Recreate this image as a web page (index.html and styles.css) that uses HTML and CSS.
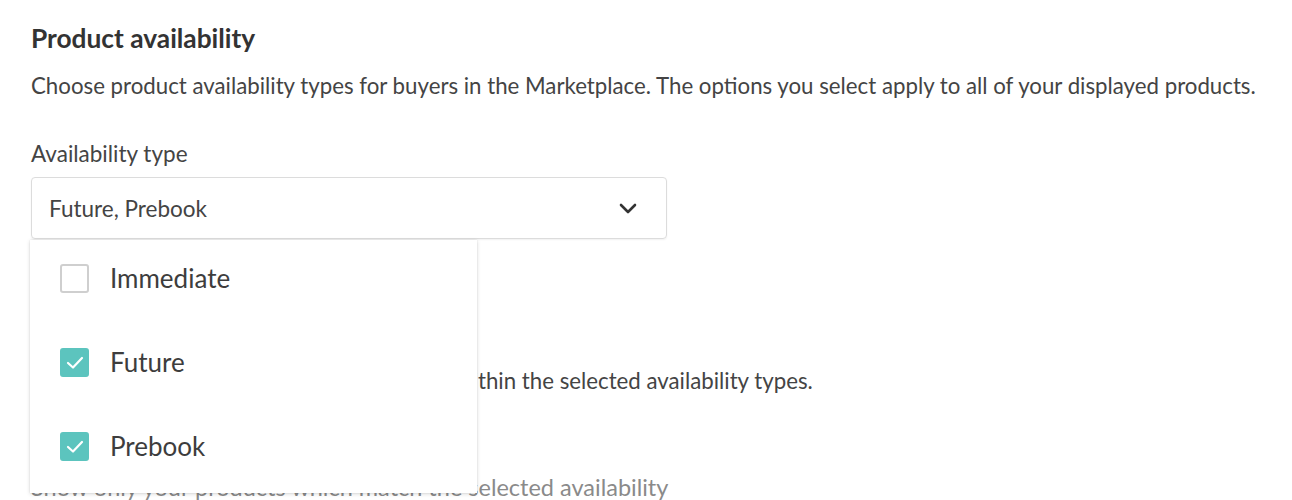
FILE: index.html
```html
<!DOCTYPE html>
<html lang="en">
<head>
<meta charset="utf-8">
<title>Product availability</title>
<link rel="stylesheet" href="styles.css">
</head>
<body>
<main class="page">
  <h2 class="title">Product availability</h2>
  <p class="desc">Choose product availability types for buyers in the Marketplace. The options you select apply to all of your displayed products.</p>
  <div class="field-label">Availability type</div>
  <div class="select-wrap">
    <div class="select">
      <span class="select-value">Future, Prebook</span>
      <svg class="chevron" width="18" height="11" viewBox="0 0 18 11"><path d="M2 2 L9 9 L16 2" fill="none" stroke="#333" stroke-width="2.6" stroke-linecap="round" stroke-linejoin="round"/></svg>
    </div>
    <div class="menu">
      <label class="option">
        <span class="box"></span>
        <span class="option-text">Immediate</span>
      </label>
      <label class="option">
        <span class="box checked"><svg width="20" height="15" viewBox="0 0 20 15"><path d="M3 8 L8 12.5 L17 3" fill="none" stroke="#fff" stroke-width="2.2" stroke-linecap="round" stroke-linejoin="round"/></svg></span>
        <span class="option-text">Future</span>
      </label>
      <label class="option">
        <span class="box checked"><svg width="20" height="15" viewBox="0 0 20 15"><path d="M3 8 L8 12.5 L17 3" fill="none" stroke="#fff" stroke-width="2.2" stroke-linecap="round" stroke-linejoin="round"/></svg></span>
        <span class="option-text">Prebook</span>
      </label>
    </div>
  </div>
  <p class="note">Buyers will view products that are available within the selected availability types.</p>
  <p class="note muted">Show only your products which match the selected availability</p>
</main>
</body>
</html>
```
FILE: styles.css
```css
html, body {
  margin: 0;
  padding: 0;
  background: #fff;
}
body {
  font-family: Lato, "Open Sans", "Liberation Sans", sans-serif;
  color: #444;
  overflow: hidden;
}
.page {
  padding: 23px 0 0 31px;
}
.title {
  margin: 0;
  font-size: 26.3px;
  font-weight: 700;
  line-height: 30px;
  color: #333;
}
.desc {
  margin: 19px 0 0;
  font-size: 22.25px;
  line-height: 28px;
  color: #444;
}
.field-label {
  margin-top: 40px;
  font-size: 22.5px;
  line-height: 28px;
  color: #444;
}
.select-wrap {
  position: relative;
  width: 636px;
  margin-top: 9px;
}
.select {
  box-sizing: border-box;
  height: 62px;
  border: 1px solid #dcdcdc;
  border-radius: 4px;
  display: flex;
  align-items: center;
  justify-content: space-between;
  padding: 0 29px 0 17px;
  box-shadow: 0 1px 2px rgba(0,0,0,0.06);
}
.select-value {
  font-size: 22.5px;
  color: #444;
}
.chevron {
  display: block;
}
.menu {
  position: absolute;
  top: 63px;
  left: -1px;
  width: 447px;
  box-sizing: border-box;
  background: #fff;
  padding: 24px 0 33px 30px;
  display: flex;
  flex-direction: column;
  gap: 56px;
  box-shadow: 0 1px 4px rgba(0,0,0,0.16), 0 0 1px rgba(0,0,0,0.12);
  z-index: 2;
}
.option {
  display: flex;
  align-items: center;
  gap: 21px;
  height: 28px;
}
.box {
  box-sizing: border-box;
  width: 29px;
  height: 29px;
  border: 2px solid #cfcfcf;
  border-radius: 3px;
  display: flex;
  align-items: center;
  justify-content: center;
  flex: none;
}
.box.checked {
  background: #5cc4be;
  border-color: #5cc4be;
}
.box svg {
  display: block;
}
.option-text {
  font-size: 26px;
  color: #3d3d3d;
}
.note {
  margin: 128px 0 0;
  font-size: 22.25px;
  line-height: 28px;
  color: #444;
}
.note.muted {
  margin-top: 78px;
  font-size: 23.5px;
  color: #8a8a8a;
}
```
